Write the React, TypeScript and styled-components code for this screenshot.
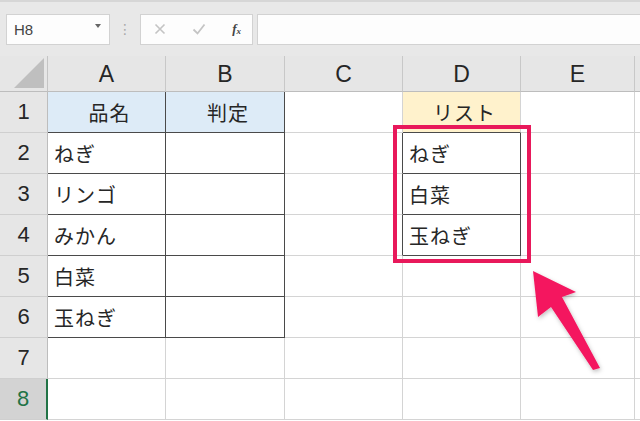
import React from "react";
import styled, { createGlobalStyle } from "styled-components";

const GlobalStyle = createGlobalStyle`
  html, body {
    margin: 0;
    padding: 0;
    background: #ffffff;
  }
  body {
    width: 640px;
    height: 421px;
    overflow: hidden;
    font-family: "Noto Sans CJK JP", "Noto Sans", sans-serif;
  }
`;

const COLS = ["A", "B", "C", "D", "E", ""];
const ROWS = 8;

// cell text, row-major, [A, B, C, D, E, F]
const DATA: Record<number, string[]> = {
  1: ["品名", "判定", "", "リスト", "", ""],
  2: ["ねぎ", "", "", "ねぎ", "", ""],
  3: ["リンゴ", "", "", "白菜", "", ""],
  4: ["みかん", "", "", "玉ねぎ", "", ""],
  5: ["白菜", "", "", "", "", ""],
  6: ["玉ねぎ", "", "", "", "", ""],
};

// which cell edges get the thin dark border
const darkRight = (r: number, c: number) =>
  (r >= 1 && r <= 6 && (c === 0 || c === 1)) ||
  (r >= 2 && r <= 4 && (c === 2 || c === 3));
const darkBottom = (r: number, c: number) =>
  (r >= 1 && r <= 6 && (c === 0 || c === 1)) ||
  (r >= 1 && r <= 4 && c === 3);

const fillFor = (r: number, c: number) => {
  if (r === 1 && (c === 0 || c === 1)) return "#ddebf7";
  if (r === 1 && c === 3) return "#fff2cc";
  return "#ffffff";
};

const App = () => {
  return (
    <>
      <GlobalStyle />
      <Page>
        <FormulaBar>
          <NameBox>
            <span>H8</span>
            <Caret />
          </NameBox>
          <Grip>⋮</Grip>
          <FxButtons>
            <FxIcon>
              <svg width="12" height="12" viewBox="0 0 12 12">
                <path d="M1.5 1.5l9 9M10.5 1.5l-9 9" stroke="#c4c4c4" strokeWidth="1.6" />
              </svg>
            </FxIcon>
            <FxIcon>
              <svg width="14" height="12" viewBox="0 0 14 12">
                <path d="M1.5 6.5l4 4 7-9" fill="none" stroke="#c4c4c4" strokeWidth="1.8" />
              </svg>
            </FxIcon>
            <FxLabel>
              f<sub>x</sub>
            </FxLabel>
          </FxButtons>
          <FormulaInput />
        </FormulaBar>

        <Sheet>
          <Corner>
            <svg width="30" height="30" viewBox="0 0 30 30">
              <polygon points="0,30 30,0 30,30" fill="#bfbfbf" />
            </svg>
          </Corner>
          {COLS.map((col, i) => (
            <ColHead key={"h" + i}>{col}</ColHead>
          ))}

          {Array.from({ length: ROWS }, (_, idx) => {
            const r = idx + 1;
            const row = DATA[r] || ["", "", "", "", "", ""];
            return (
              <React.Fragment key={r}>
                <RowHead $active={r === 8}>{r}</RowHead>
                {row.map((text, c) => (
                  <Cell
                    key={c}
                    $fill={fillFor(r, c)}
                    $center={r === 1}
                    $darkRight={darkRight(r, c)}
                    $darkBottom={darkBottom(r, c)}
                  >
                    {text}
                  </Cell>
                ))}
              </React.Fragment>
            );
          })}

          <Highlight />
          <Arrow>
            <svg width="90" height="120" viewBox="0 0 90 120">
              <defs>
                <filter id="sh" x="-30%" y="-30%" width="160%" height="160%">
                  <feDropShadow dx="1" dy="2" stdDeviation="2" floodColor="#000" floodOpacity="0.25" />
                </filter>
              </defs>
              <polygon
                points="3,3 46,24 32,29 70,100 63,102 21,39 8,49"
                fill="#f4175f"
                filter="url(#sh)"
              />
            </svg>
          </Arrow>
        </Sheet>
      </Page>
    </>
  );
};

export default App;

const Page = styled.div`
  display: flex;
  flex-direction: column;
  width: 640px;
  height: 421px;
  overflow: hidden;
  background: #ffffff;
`;

const FormulaBar = styled.div`
  display: flex;
  align-items: center;
  height: 56px;
  box-sizing: border-box;
  padding: 0 0 0 6px;
  background: #e8e8e8;
  border-top: 2px solid #d6d6d6;
`;

const NameBox = styled.div`
  display: flex;
  align-items: center;
  justify-content: space-between;
  width: 104px;
  height: 31px;
  box-sizing: border-box;
  padding: 0 8px 0 7px;
  background: #fdfdfd;
  border: 1px solid #d2d2d2;
  font-family: "Liberation Sans", Arial, sans-serif;
  font-size: 15px;
  color: #444444;
`;

const Caret = styled.span`
  width: 0;
  height: 0;
  border-left: 3.5px solid transparent;
  border-right: 3.5px solid transparent;
  border-top: 4px solid #666666;
  margin-top: -6px;
`;

const Grip = styled.span`
  width: 30px;
  text-align: center;
  font-family: "DejaVu Sans", sans-serif;
  font-size: 14px;
  color: #a8a8a8;
`;

const FxButtons = styled.div`
  display: flex;
  align-items: center;
  justify-content: space-between;
  width: 113px;
  height: 31px;
  box-sizing: border-box;
  padding: 0 11px 0 13px;
  background: #fdfdfd;
  border: 1px solid #d2d2d2;
`;

const FxIcon = styled.span`
  display: flex;
  align-items: center;
`;

const FxLabel = styled.span`
  font-family: "Liberation Serif", "Times New Roman", serif;
  font-style: italic;
  font-weight: bold;
  font-size: 13px;
  color: #444444;
  sub {
    font-size: 9px;
    vertical-align: -1px;
  }
`;

const FormulaInput = styled.div`
  flex: 1;
  height: 31px;
  margin-left: 4px;
  box-sizing: border-box;
  background: #fdfdfd;
  border: 1px solid #d2d2d2;
  border-right: none;
`;

const Sheet = styled.div`
  position: relative;
  display: grid;
  grid-template-columns: 48px 118px 119px 118px 118px 114px 1fr;
  grid-template-rows: 36px repeat(${ROWS}, 41px);
`;

const Corner = styled.div`
  display: flex;
  align-items: flex-end;
  justify-content: flex-end;
  box-sizing: border-box;
  padding: 0 3px 3px 0;
  background: #e6e6e6;
  border-right: 1px solid #c4c4c4;
  border-bottom: 1px solid #bdbdbd;
`;

const ColHead = styled.div`
  display: flex;
  align-items: center;
  justify-content: center;
  box-sizing: border-box;
  padding-top: 1px;
  background: #e6e6e6;
  border-right: 1px solid #c8c8c8;
  border-bottom: 1px solid #bdbdbd;
  font-family: "Liberation Sans", Arial, sans-serif;
  font-size: 23px;
  color: #262626;
`;

const RowHead = styled.div<{ $active?: boolean }>`
  display: flex;
  align-items: center;
  justify-content: center;
  box-sizing: border-box;
  background: ${(p) => (p.$active ? "#d3d3d3" : "#e6e6e6")};
  border-right: ${(p) => (p.$active ? "2px solid #217346" : "1px solid #bdbdbd")};
  border-bottom: 1px solid #cfcfcf;
  font-family: "Liberation Sans", Arial, sans-serif;
  font-size: 22px;
  color: ${(p) => (p.$active ? "#217346" : "#262626")};
`;

const Cell = styled.div<{
  $fill: string;
  $center?: boolean;
  $darkRight?: boolean;
  $darkBottom?: boolean;
}>`
  display: flex;
  align-items: center;
  justify-content: ${(p) => (p.$center ? "center" : "flex-start")};
  box-sizing: border-box;
  padding: 1px 0 0 6px;
  background: ${(p) => p.$fill};
  border-right: 1px solid ${(p) => (p.$darkRight ? "#4a4a4a" : "#d4d4d4")};
  border-bottom: 1px solid ${(p) => (p.$darkBottom ? "#4a4a4a" : "#d4d4d4")};
  font-family: "Noto Sans CJK JP", "Noto Sans", sans-serif;
  font-size: 20px;
  color: #262626;
  letter-spacing: 1px;
  white-space: nowrap;
`;

const Highlight = styled.div`
  position: absolute;
  left: 393px;
  top: 69px;
  width: 138px;
  height: 138px;
  box-sizing: border-box;
  border: 4px solid #e8195b;
  pointer-events: none;
`;

const Arrow = styled.div`
  position: absolute;
  left: 530px;
  top: 212px;
  width: 90px;
  height: 120px;
  pointer-events: none;
`;
